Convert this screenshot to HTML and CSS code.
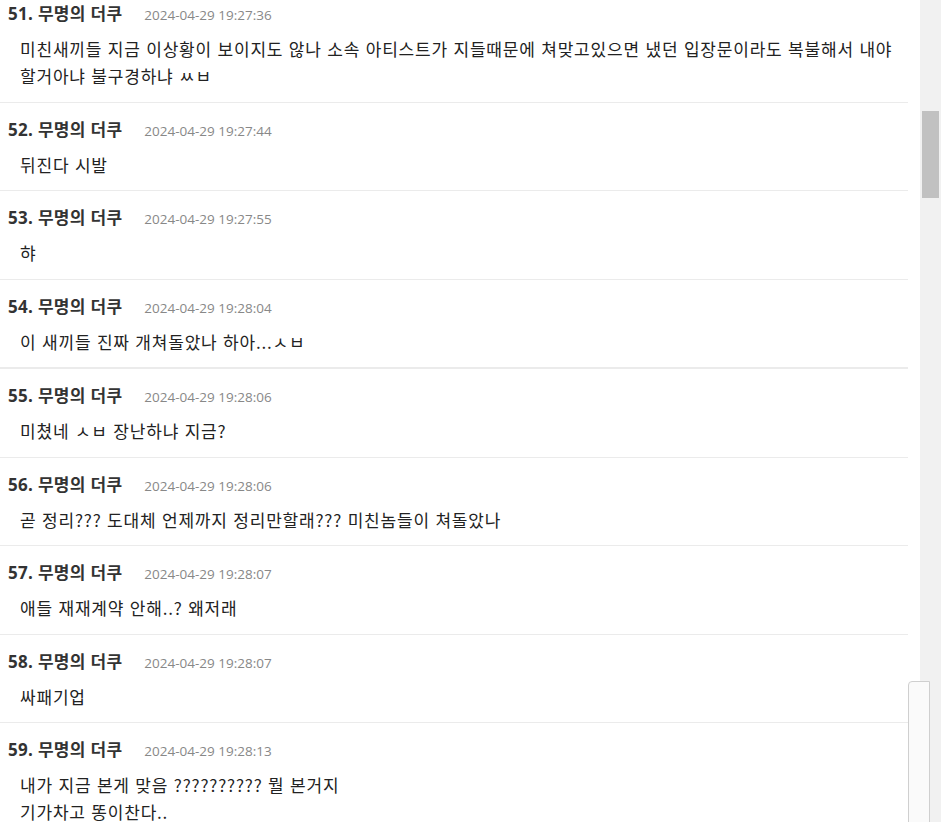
FILE: index.html
```html
<!DOCTYPE html>
<html lang="ko">
<head>
  <meta charset="UTF-8">
  <meta name="viewport" content="width=device-width, initial-scale=1">
  <title>댓글</title>
  <link rel="stylesheet" href="styles.css">
</head>
<body>
  <div class="page">
    <div class="comments">
      <div class="comment">
        <div class="comment-head"><span class="comment-name">51. 무명의 더쿠</span><span class="comment-date">2024-04-29 19:27:36</span></div>
        <div class="comment-body">미친새끼들 지금 이상황이 보이지도 않나 소속 아티스트가 지들때문에 쳐맞고있으면 냈던 입장문이라도 복불해서 내야 할거아냐 불구경하냐 ㅆㅂ</div>
      </div>
      <div class="comment">
        <div class="comment-head"><span class="comment-name">52. 무명의 더쿠</span><span class="comment-date">2024-04-29 19:27:44</span></div>
        <div class="comment-body">뒤진다 시발</div>
      </div>
      <div class="comment">
        <div class="comment-head"><span class="comment-name">53. 무명의 더쿠</span><span class="comment-date">2024-04-29 19:27:55</span></div>
        <div class="comment-body">햐</div>
      </div>
      <div class="comment thick">
        <div class="comment-head"><span class="comment-name">54. 무명의 더쿠</span><span class="comment-date">2024-04-29 19:28:04</span></div>
        <div class="comment-body">이 새끼들 진짜 개쳐돌았나 하아...ㅅㅂ</div>
      </div>
      <div class="comment">
        <div class="comment-head"><span class="comment-name">55. 무명의 더쿠</span><span class="comment-date">2024-04-29 19:28:06</span></div>
        <div class="comment-body">미쳤네 ㅅㅂ 장난하냐 지금?</div>
      </div>
      <div class="comment">
        <div class="comment-head"><span class="comment-name">56. 무명의 더쿠</span><span class="comment-date">2024-04-29 19:28:06</span></div>
        <div class="comment-body">곧 정리??? 도대체 언제까지 정리만할래??? 미친놈들이 쳐돌았나</div>
      </div>
      <div class="comment">
        <div class="comment-head"><span class="comment-name">57. 무명의 더쿠</span><span class="comment-date">2024-04-29 19:28:07</span></div>
        <div class="comment-body">애들 재재계약 안해..? 왜저래</div>
      </div>
      <div class="comment">
        <div class="comment-head"><span class="comment-name">58. 무명의 더쿠</span><span class="comment-date">2024-04-29 19:28:07</span></div>
        <div class="comment-body">싸패기업</div>
      </div>
      <div class="comment">
        <div class="comment-head"><span class="comment-name">59. 무명의 더쿠</span><span class="comment-date">2024-04-29 19:28:13</span></div>
        <div class="comment-body">내가 지금 본게 맞음 ?????????? 뭘 본거지<br>기가차고 똥이찬다..</div>
      </div>
    </div>
    <div class="gutter"></div>
    <div class="scrollbar"><div class="scroll-thumb"></div></div>
  </div>

  <!-- 오른쪽 아래 접힌 패널 -->
  <div class="side-tab"></div>
</body>
</html>
```

FILE: styles.css
```css
body {
  margin: 0;
  overflow: hidden;
  background: white;
  font-family: "Noto Sans CJK KR", sans-serif;
  color: #333;
}

.page {
  display: flex;
  height: 822px;
  overflow: hidden;
}

.comments {
  flex: 0 0 908px;
  margin-top: -13px;
}

.gutter {
  flex: 0 0 12px;
}

.scrollbar {
  flex: 0 0 21px;
  background: #f1f1f1;
  padding: 111px 2px 0 2px;
  box-sizing: border-box;
}

.scroll-thumb {
  height: 87px;
  background: #c1c1c1;
}

.comment {
  padding: 15px 0 12.5px 0;
  border-bottom: 1px solid #ebebeb;
}

.comment.thick {
  border-bottom: 2px solid #ebebeb;
}

.comment-head {
  display: flex;
  align-items: baseline;
  height: 24px;
  padding-left: 8px;
  line-height: 24px;
  overflow: hidden;
}

.comment-name {
  font-family: "Open Sans", "Noto Sans CJK KR", sans-serif;
  font-size: 17px;
  font-weight: bold;
  letter-spacing: 0.3px;
  color: #333;
}

.comment-date {
  margin-left: 22px;
  font-family: "Open Sans", sans-serif;
  font-size: 13.5px;
  color: #888;
}

.comment-body {
  margin-top: 9px;
  padding: 0 12px 0 20px;
  font-size: 17px;
  letter-spacing: 0.8px;
  line-height: 27px;
  color: #222;
}

/* 접힌 패널 */
.side-tab {
  position: fixed;
  left: 908px;
  top: 681px;
  width: 20px;
  height: 160px;
  background: #fafafa;
  border: 1px solid #cfcfcf;
  border-radius: 4px 0 0 4px;
}
```
